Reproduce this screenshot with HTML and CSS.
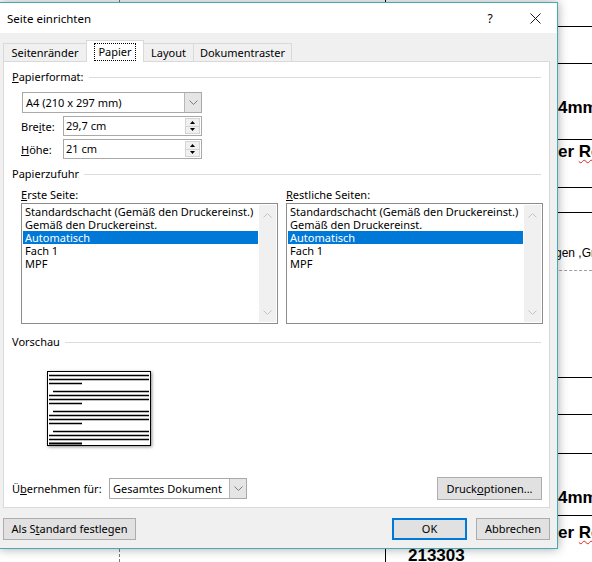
FILE: index.html
```html
<!DOCTYPE html>
<html lang="de">
<head>
    <meta charset="UTF-8">
    <title>Seite einrichten</title>
    <link rel="stylesheet" href="styles.css">
</head>
<body>
    <!-- Word document behind the dialog -->
    <div class="doc">
        <div class="doc-vline dashed"></div>
        <div class="doc-vline solid"></div>
        <div class="doc-text head-art">Art. Nr. / Art. No.:</div>
        <div class="doc-text head-size">Größe / Size:</div>
        <div class="doc-hline" style="top:26px"></div>
        <div class="doc-hline" style="top:63px"></div>
        <div class="doc-text" style="top:98px;left:558px">4mm</div>
        <div class="doc-hline" style="top:139px"></div>
        <div class="doc-text" style="top:142px;left:558px">er <span class="typo">Referenz</span></div>
        <div class="doc-hline" style="top:187px"></div>
        <div class="doc-hline" style="top:212px"></div>
        <div class="doc-text plain" style="top:246px;left:555px">gen ,Gr</div>
        <div class="doc-hline dashed" style="top:270px"></div>
        <div class="doc-hline" style="top:377px"></div>
        <div class="doc-hline" style="top:414px"></div>
        <div class="doc-hline" style="top:453px"></div>
        <div class="doc-text" style="top:488px;left:558px">4mm</div>
        <div class="doc-hline" style="top:515px"></div>
        <div class="doc-text" style="top:523px;left:558px">er <span class="typo">Referenz</span></div>
        <div class="doc-text" style="top:546px;left:408px">213303</div>
    </div>

    <div class="dialog">
        <div class="titlebar">
            <span class="title">Seite einrichten</span>
            <span class="help">?</span>
            <span class="close">
                <svg width="11" height="11" viewBox="0 0 11 11"><path d="M0.5 0.5 L10.5 10.5 M10.5 0.5 L0.5 10.5" stroke="#1a1a1a" stroke-width="1" fill="none"/></svg>
            </span>
        </div>
        <div class="dialog-body">
            <div class="tabs">
                <div class="tab" style="width:84px">Seitenränder</div>
                <div class="tab active" style="width:58px"><span class="focus">Papier</span></div>
                <div class="tab" style="width:51px">Layout</div>
                <div class="tab" style="width:99px">Dokumentraster</div>
            </div>
            <div class="panel">
                <div class="group-head"><span><u>P</u>apierformat:</span></div>
                <div class="combo paper-size">
                    <span class="combo-text">A4 (210 x 297 mm)</span>
                    <span class="combo-btn">
                        <svg width="9" height="5" viewBox="0 0 9 5"><path d="M0.5 0.5 L4.5 4.5 L8.5 0.5" stroke="#7a7a7a" fill="none"/></svg>
                    </span>
                </div>
                <div class="field-row">
                    <label>Bre<u>i</u>te:</label>
                    <div class="spin">
                        <span class="spin-text">29,7 cm</span>
                        <span class="spin-btns">
                            <span><svg width="5" height="3" viewBox="0 0 5 3"><path d="M0 3 L2.5 0 L5 3 Z" fill="#000"/></svg></span>
                            <span><svg width="5" height="3" viewBox="0 0 5 3"><path d="M0 0 L2.5 3 L5 0 Z" fill="#000"/></svg></span>
                        </span>
                    </div>
                </div>
                <div class="field-row">
                    <label><u>H</u>öhe:</label>
                    <div class="spin">
                        <span class="spin-text">21 cm</span>
                        <span class="spin-btns">
                            <span><svg width="5" height="3" viewBox="0 0 5 3"><path d="M0 3 L2.5 0 L5 3 Z" fill="#000"/></svg></span>
                            <span><svg width="5" height="3" viewBox="0 0 5 3"><path d="M0 0 L2.5 3 L5 0 Z" fill="#000"/></svg></span>
                        </span>
                    </div>
                </div>

                <div class="group-head feed-head"><span>Papierzufuhr</span></div>
                <div class="feed">
                    <div class="feed-col">
                        <div class="feed-label"><u>E</u>rste Seite:</div>
                        <div class="listbox">
                            <div class="items">
                                <div class="item">Standardschacht (Gemäß den Druckereinst.)</div>
                                <div class="item">Gemäß den Druckereinst.</div>
                                <div class="item selected">Automatisch</div>
                                <div class="item">Fach 1</div>
                                <div class="item">MPF</div>
                            </div>
                            <div class="scrollbar">
                                <svg width="9" height="5" viewBox="0 0 9 5"><path d="M0.5 4.5 L4.5 0.5 L8.5 4.5" stroke="#c4c4c4" fill="none"/></svg>
                                <svg width="9" height="5" viewBox="0 0 9 5"><path d="M0.5 0.5 L4.5 4.5 L8.5 0.5" stroke="#c4c4c4" fill="none"/></svg>
                            </div>
                        </div>
                    </div>
                    <div class="feed-col">
                        <div class="feed-label"><u>R</u>estliche Seiten:</div>
                        <div class="listbox">
                            <div class="items">
                                <div class="item">Standardschacht (Gemäß den Druckereinst.)</div>
                                <div class="item">Gemäß den Druckereinst.</div>
                                <div class="item selected">Automatisch</div>
                                <div class="item">Fach 1</div>
                                <div class="item">MPF</div>
                            </div>
                            <div class="scrollbar">
                                <svg width="9" height="5" viewBox="0 0 9 5"><path d="M0.5 4.5 L4.5 0.5 L8.5 4.5" stroke="#c4c4c4" fill="none"/></svg>
                                <svg width="9" height="5" viewBox="0 0 9 5"><path d="M0.5 0.5 L4.5 4.5 L8.5 0.5" stroke="#c4c4c4" fill="none"/></svg>
                            </div>
                        </div>
                    </div>
                </div>

                <div class="group-head preview-head"><span>Vorschau</span></div>
                <div class="preview-page">
                    <svg width="102" height="73" viewBox="0 0 102 73">
                        <g stroke="#000" stroke-width="1.3">
                            <path d="M1 3.5 H101 M1 7.5 H101 M1 11.5 H34"/>
                            <path d="M5 19.5 H101 M1 23.5 H101 M1 27.5 H101 M1 31.5 H34"/>
                            <path d="M5 39.5 H101 M1 43.5 H101 M1 47.5 H101 M1 51.5 H34"/>
                            <path d="M5 59.5 H101 M1 63.5 H101 M1 67.5 H101"/>
                        </g>
                        <path d="M1 71.5 H34" stroke="#000" stroke-width="2"/>
                    </svg>
                </div>

                <div class="apply-row">
                    <label>Ü<u>b</u>ernehmen für:</label>
                    <div class="combo apply">
                        <span class="combo-text">Gesamtes Dokument</span>
                        <span class="combo-btn">
                            <svg width="9" height="5" viewBox="0 0 9 5"><path d="M0.5 0.5 L4.5 4.5 L8.5 0.5" stroke="#7a7a7a" fill="none"/></svg>
                        </span>
                    </div>
                    <button class="btn print-opts">Druck<u>o</u>ptionen...</button>
                </div>
            </div>
            <div class="buttons">
                <button class="btn default-btn">Als S<u>t</u>andard festlegen</button>
                <button class="btn ok">OK</button>
                <button class="btn cancel">Abbrechen</button>
            </div>
        </div>
    </div>
</body>
</html>
```

FILE: styles.css
```css
* {
    box-sizing: border-box;
}
body {
    margin: 0;
    width: 592px;
    height: 562px;
    overflow: hidden;
    position: relative;
    background: #fff;
    font-family: "Noto Sans", "Open Sans", sans-serif;
    font-size: 11px;
    color: #000;
}

/* document in the background */
.doc {
    position: absolute;
    left: 0;
    top: 0;
    width: 592px;
    height: 562px;
    overflow: hidden;
    font-family: "Liberation Sans", Arial, sans-serif;
}
.doc-vline {
    position: absolute;
    top: 0;
    bottom: 0;
    width: 0;
}
.doc-vline.dashed {
    left: 119px;
    border-left: 1px dashed #7a7a7a;
}
.doc-vline.solid {
    left: 385px;
    border-left: 1px solid #000;
}
.doc-hline {
    position: absolute;
    left: 385px;
    right: 0;
    border-top: 1px solid #000;
}
.doc-hline.dashed {
    border-top: 1px dashed #a0a0a0;
}
.doc-text {
    position: absolute;
    font-weight: bold;
    font-size: 17px;
    line-height: 20px;
    white-space: nowrap;
}
.doc-text.plain {
    font-weight: normal;
    font-size: 12px;
    line-height: 14px;
}
.head-art {
    left: 150px;
    top: -15px;
}
.head-size {
    left: 410px;
    top: -15px;
}
.typo {
    text-decoration: underline wavy #e02020;
    text-decoration-thickness: 1px;
    text-underline-offset: 2px;
}

/* dialog */
.dialog {
    position: absolute;
    left: -1px;
    top: 2px;
    width: 559px;
    height: 547px;
    border: 1px solid #45a9b6;
    background: #f0f0f0;
    box-shadow: 0 0 10px rgba(0, 0, 0, 0.35);
    display: flex;
    flex-direction: column;
}
.titlebar {
    height: 30px;
    flex-shrink: 0;
    background: #fff;
    display: flex;
    align-items: center;
    padding-left: 7px;
}
.title {
    flex: 1;
    font-size: 11.5px;
}
.help {
    width: 46px;
    text-align: center;
    font-size: 12px;
}
.close {
    width: 44px;
    height: 30px;
    display: flex;
    align-items: center;
    justify-content: center;
}
.dialog-body {
    flex: 1;
    padding: 7px 7px 0 3px;
}

/* tabs */
.tabs {
    display: flex;
    align-items: flex-end;
    height: 21px;
}
.tab {
    flex-shrink: 0;
    height: 18px;
    line-height: 17px;
    text-align: center;
    border: 1px solid #d9d9d9;
    border-bottom: none;
    background: #f0f0f0;
    margin-left: -1px;
    white-space: nowrap;
}
.tab:first-child {
    margin-left: 0;
}
.tab.active {
    position: relative;
    z-index: 1;
    height: 22px;
    margin-bottom: -1px;
    background: #fff;
    padding-top: 3px;
    line-height: 16px;
}
.focus {
    display: inline-block;
    outline: 1px dotted #000;
    padding: 0 3px;
    line-height: 16px;
}

/* tab page */
.panel {
    height: 447px;
    background: #fff;
    border: 1px solid #d9d9d9;
    padding: 7px 8px 0 8px;
}
.group-head {
    display: flex;
    align-items: center;
    gap: 5px;
    height: 16px;
    line-height: 16px;
    white-space: nowrap;
}
.group-head::after {
    content: "";
    flex: 1;
    height: 1px;
    background: #dcdcdc;
}
.feed-head {
    margin-top: 7px;
}
.preview-head {
    margin-top: 10px;
}

.combo {
    flex-shrink: 0;
    display: flex;
    height: 21px;
    border: 1px solid #a9a9a9;
    background: #fff;
}
.combo-text {
    flex: 1;
    line-height: 19px;
    padding-left: 3px;
    white-space: nowrap;
    overflow: hidden;
}
.combo-btn {
    width: 17px;
    flex-shrink: 0;
    background: #e5e5e5;
    border-left: 1px solid #b8b8b8;
    display: flex;
    align-items: center;
    justify-content: center;
}
.paper-size {
    width: 180px;
    margin: 7px 0 0 10px;
}

.field-row {
    display: flex;
    align-items: center;
    margin-top: 3px;
    height: 20px;
}
.field-row label {
    flex-shrink: 0;
    width: 42px;
    margin-left: 9px;
}
.spin {
    flex-shrink: 0;
    display: flex;
    width: 139px;
    height: 20px;
    border: 1px solid #a9a9a9;
}
.spin-text {
    flex: 1;
    line-height: 18px;
    padding-left: 2px;
}
.spin-btns {
    width: 16px;
    padding: 1px 1px 1px 0;
    display: flex;
    flex-direction: column;
}
.spin-btns span {
    flex: 1;
    background: #f0f0f0;
    border: 1px solid #d4d4d4;
    display: flex;
    align-items: center;
    justify-content: center;
}
.spin-btns span + span {
    border-top: none;
}

/* paper feed */
.feed {
    display: flex;
    gap: 8px;
    margin-top: 5px;
    padding-left: 9px;
}
.feed-label {
    height: 15px;
    line-height: 15px;
    margin-bottom: 1px;
}
.listbox {
    width: 257px;
    height: 121px;
    border: 1px solid #8c8c8c;
    padding: 1px;
    display: flex;
}
.items {
    flex: 1;
    min-width: 0;
    overflow: hidden;
}
.item {
    height: 13px;
    line-height: 13px;
    padding-left: 2px;
    white-space: nowrap;
}
.item.selected {
    background: #0078d7;
    color: #fff;
}
.scrollbar {
    width: 17px;
    flex-shrink: 0;
    margin-left: 1px;
    background: #f0f0f0;
    display: flex;
    flex-direction: column;
    justify-content: space-between;
    align-items: center;
    padding: 8px 0 7px;
}

/* preview */
.preview-page {
    width: 104px;
    height: 75px;
    margin: 21px 0 0 35px;
    border: 1px solid #000;
    background: #fff;
    box-shadow: 1px 1px 3px rgba(0, 0, 0, 0.45);
}
.preview-page svg {
    display: block;
}

.apply-row {
    display: flex;
    align-items: center;
    height: 23px;
    margin-top: 31px;
}
.apply-row label {
    flex-shrink: 0;
    width: 97px;
    white-space: nowrap;
}
.apply {
    width: 138px;
}

/* buttons */
.btn {
    flex-shrink: 0;
    font-family: "Noto Sans", "Open Sans", sans-serif;
    font-size: 11px;
    color: #000;
    background: #e1e1e1;
    border: 1px solid #adadad;
    padding: 0;
    height: 22px;
    line-height: 18px;
    white-space: nowrap;
}
.print-opts {
    width: 105px;
    height: 23px;
    margin-left: auto;
    margin-right: -1px;
}
.buttons {
    display: flex;
    margin-top: 10px;
}
.default-btn {
    width: 133px;
}
.ok {
    width: 75px;
    margin-left: auto;
    border: 2px solid #0078d7;
}
.cancel {
    width: 74px;
    margin-left: 9px;
}
```
